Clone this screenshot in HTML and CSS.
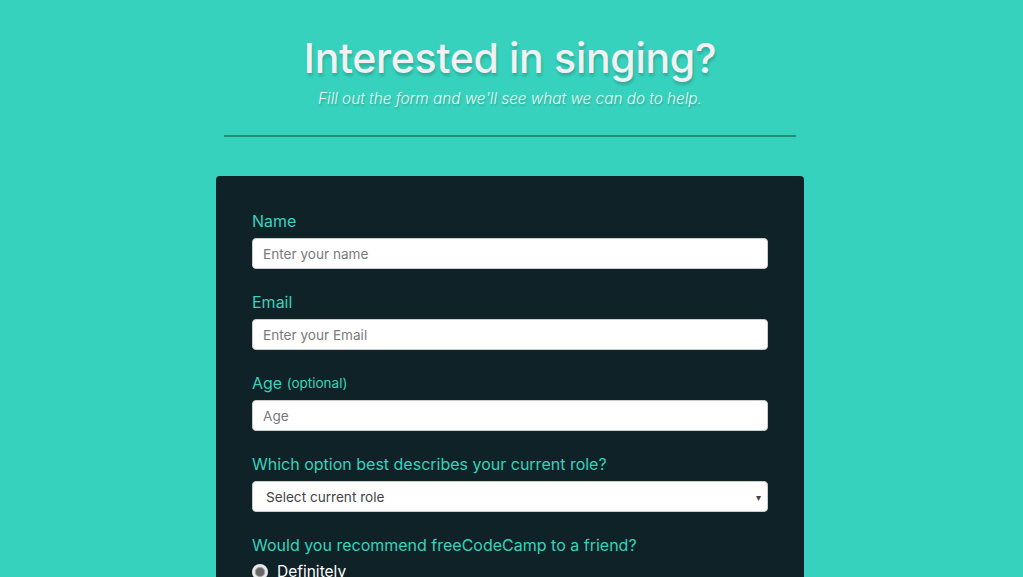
FILE: index.html
```html
<!DOCTYPE html>
<html lang="en">
<head>
<meta charset="utf-8">
<title>Survey Form</title>
<link rel="stylesheet" href="styles.css">
</head>
<body>
<div class="page">
<header class="header">
  <h1 class="title">Interested in singing?</h1>
  <p class="subtitle">Fill out the form and we'll see what we can do to help.</p>
  <hr class="rule">
</header>
<form class="card">
  <div class="group">
    <label class="label" for="name">Name</label>
    <input class="field" id="name" type="text" placeholder="Enter your name">
  </div>
  <div class="group">
    <label class="label" for="email">Email</label>
    <input class="field" id="email" type="email" placeholder="Enter your Email">
  </div>
  <div class="group">
    <label class="label" for="age">Age <span class="opt">(optional)</span></label>
    <input class="field" id="age" type="number" placeholder="Age">
  </div>
  <div class="group">
    <label class="label" for="role">Which option best describes your current role?</label>
    <div class="select" id="role">
      <span class="select-text">Select current role</span>
      <span class="arrow">▾</span>
    </div>
  </div>
  <div class="group">
    <p class="label">Would you recommend freeCodeCamp to a friend?</p>
    <label class="radio"><span class="dot"></span>Definitely</label>
  </div>
</form>
</div>
</body>
</html>
```

FILE: styles.css
```css
html, body {
  margin: 0;
  padding: 0;
}
body {
  background: #37d2bd;
  font-family: "Inter", "Noto Sans", sans-serif;
  height: 577px;
  overflow: hidden;
}
.page {
  padding-right: 3px;
}
.header {
  display: flex;
  flex-direction: column;
  align-items: center;
  padding-top: 28px;
}
.title {
  margin: 0;
  font-size: 41px;
  font-weight: 500;
  letter-spacing: -0.3px;
  color: #f1f1f1;
  text-shadow: 1px 3px 3px rgba(0, 0, 0, 0.18);
  line-height: 60px;
}
.subtitle {
  margin: 0;
  font-size: 15.3px;
  font-style: italic;
  font-weight: 300;
  color: #eaf6f3;
  text-shadow: 1px 2px 2px rgba(0, 0, 0, 0.18);
  line-height: 22px;
}
.rule {
  width: 572px;
  margin: 25px 0 0;
  border: 0;
  border-top: 2px solid #1f8f70;
}
.card {
  width: 516px;
  margin: 39px auto 0;
  padding: 35px 36px 20px;
  background: #0f2227;
  border-radius: 4px;
  box-sizing: content-box;
}
.group {
  display: flex;
  flex-direction: column;
  margin-bottom: 23px;
}
.label {
  display: block;
  height: 20px;
  margin: 0 0 7px;
  color: #37d2bd;
  font-size: 16px;
  line-height: 20px;
}
.opt {
  font-size: 13.5px;
  line-height: 1;
  vertical-align: 1px;
}
.field {
  height: 31px;
  box-sizing: border-box;
  border: 1px solid #ccc;
  border-radius: 4px;
  padding: 0 10px;
  font-family: inherit;
  font-size: 13.6px;
  background: #fff;
}
.field::placeholder {
  color: #7a7a7a;
}
.select {
  height: 31px;
  box-sizing: border-box;
  border: 1px solid #ccc;
  border-radius: 4px;
  background: #fff;
  display: flex;
  align-items: center;
  justify-content: space-between;
  padding: 0 6px 0 13px;
  font-size: 13.6px;
  color: #444;
}
.arrow {
  font-size: 10px;
  color: #444;
}
.radio {
  display: flex;
  align-items: center;
  gap: 9px;
  color: #fff;
  font-size: 15.5px;
  line-height: 20px;
}
.dot {
  width: 10px;
  height: 10px;
  border-radius: 50%;
  border: 3px solid #e9e9e9;
  background: #666;
  box-shadow: inset 0 0 0 1px #999;
}
```
